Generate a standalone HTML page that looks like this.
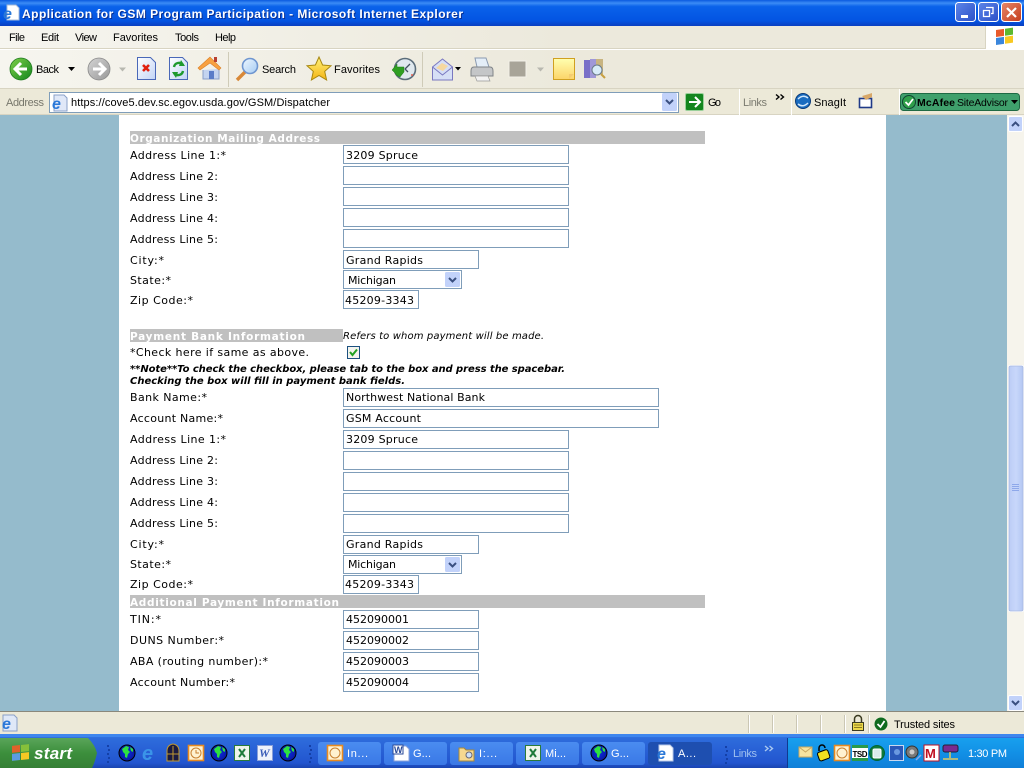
<!DOCTYPE html>
<html><head><meta charset="utf-8"><title>Application for GSM Program Participation</title>
<style>
html,body{margin:0;padding:0;width:1024px;height:768px;overflow:hidden;background:#ece9d8}
svg{display:block}
.ui{font-family:"Liberation Sans",sans-serif;font-size:11px;fill:#000}
.v{font-family:"DejaVu Sans",sans-serif;font-size:11px;fill:#000}
.h{font-family:"DejaVu Sans",sans-serif;font-size:10.5px;font-weight:bold;fill:#fff}
.f{fill:#fff;stroke:#7f9db9;stroke-width:1}
.tb{font-family:"Liberation Sans",sans-serif;font-size:11px;fill:#fff}
.ie{font-family:"Liberation Sans",sans-serif;font-weight:bold;font-style:italic;fill:#2a78d8}
</style></head><body>
<svg xmlns="http://www.w3.org/2000/svg" width="1024" height="768" viewBox="0 0 1024 768">
<defs>
<linearGradient id="title" x1="0" y1="0" x2="0" y2="1"><stop offset="0" stop-color="#0a5ae0"/><stop offset=".12" stop-color="#3b8cf5"/><stop offset=".25" stop-color="#0a62ea"/><stop offset=".8" stop-color="#0354e2"/><stop offset="1" stop-color="#0a3fc0"/></linearGradient>
<linearGradient id="tbar" x1="0" y1="0" x2="0" y2="1"><stop offset="0" stop-color="#3c80e6"/><stop offset=".12" stop-color="#2e6cdc"/><stop offset=".85" stop-color="#2255cf"/><stop offset="1" stop-color="#1a44b0"/></linearGradient>
<linearGradient id="tbtn" x1="0" y1="0" x2="0" y2="1"><stop offset="0" stop-color="#4a8cf0"/><stop offset="1" stop-color="#3a78e6"/></linearGradient>
<linearGradient id="tray" x1="0" y1="0" x2="0" y2="1"><stop offset="0" stop-color="#18a0ee"/><stop offset=".5" stop-color="#1290e6"/><stop offset="1" stop-color="#0f7fd8"/></linearGradient>
<linearGradient id="start" x1="0" y1="0" x2="0" y2="1"><stop offset="0" stop-color="#5aa55a"/><stop offset=".5" stop-color="#3c8f3c"/><stop offset="1" stop-color="#357f35"/></linearGradient>
<linearGradient id="tool" x1="0" y1="0" x2="1" y2="0"><stop offset="0" stop-color="#f6f5ef"/><stop offset=".55" stop-color="#ece9dc"/></linearGradient>
<linearGradient id="green" x1="0" y1="0" x2="1" y2="1"><stop offset="0" stop-color="#7fd04a"/><stop offset="1" stop-color="#12861e"/></linearGradient>
<linearGradient id="gray" x1="0" y1="0" x2="1" y2="1"><stop offset="0" stop-color="#d4d4d4"/><stop offset="1" stop-color="#989898"/></linearGradient>
<linearGradient id="doc" x1="0" y1="0" x2="1" y2="1"><stop offset="0" stop-color="#fff"/><stop offset="1" stop-color="#c2d4f6"/></linearGradient>
<linearGradient id="sb" x1="0" y1="0" x2="1" y2="0"><stop offset="0" stop-color="#bacbf5"/><stop offset=".5" stop-color="#c8d7fb"/><stop offset="1" stop-color="#b2c6f2"/></linearGradient>
<linearGradient id="btn" x1="0" y1="0" x2="1" y2="1"><stop offset="0" stop-color="#5e86e8"/><stop offset="1" stop-color="#2a4fc8"/></linearGradient>
<linearGradient id="cls" x1="0" y1="0" x2="1" y2="1"><stop offset="0" stop-color="#e8876a"/><stop offset="1" stop-color="#c43c1c"/></linearGradient>
<linearGradient id="note" x1="0" y1="0" x2="0" y2="1"><stop offset="0" stop-color="#ffffb0"/><stop offset="1" stop-color="#fcd468"/></linearGradient>
<linearGradient id="star" x1="0" y1="0" x2="0" y2="1"><stop offset="0" stop-color="#fff27a"/><stop offset="1" stop-color="#f4b414"/></linearGradient>
<linearGradient id="lens" x1="0" y1="0" x2="1" y2="1"><stop offset="0" stop-color="#eef7fe"/><stop offset="1" stop-color="#a6ccf4"/></linearGradient>
<radialGradient id="globe"><stop offset="0" stop-color="#0a2ee0"/><stop offset="1" stop-color="#0a18a0"/></radialGradient>
</defs>

<!-- page -->
<rect width="1024" height="768" fill="#ece9d8"/>
<rect x="0" y="115" width="1007" height="597" fill="#95bbcc"/>
<rect x="119" y="115" width="767" height="597" fill="#fff"/>

<!-- title bar -->
<rect width="1024" height="26" fill="url(#title)"/>
<g transform="translate(2,4)">
<path d="M5 1h9l3 3v12H5z" fill="#fff" stroke="#a8bcd8"/>
<text class="ie" x="1" y="15" style="font-size:16px">e</text>
</g>
<text x="23" y="19" textLength="441" lengthAdjust="spacing" style="font-family:'Liberation Sans',sans-serif;font-weight:bold;font-size:12px" fill="#0a2f90">Application for GSM Program Participation - Microsoft Internet Explorer</text>
<text x="22" y="18" textLength="441" lengthAdjust="spacing" style="font-family:'Liberation Sans',sans-serif;font-weight:bold;font-size:12px" fill="#fff">Application for GSM Program Participation - Microsoft Internet Explorer</text>
<rect x="955.500" y="2.500" width="20" height="19" rx="3" fill="url(#btn)" stroke="#fff"/>
<rect x="961" y="15" width="7" height="3" fill="#fff"/>
<rect x="978.500" y="2.500" width="20" height="19" rx="3" fill="url(#btn)" stroke="#fff"/>
<path d="M986 7.500h7v6h-2M983.500 10.500h6v6h-6z" fill="none" stroke="#fff" stroke-width="1.300"/>
<rect x="1001.500" y="2.500" width="20" height="19" rx="3" fill="url(#cls)" stroke="#fff"/>
<path d="M1007 8l9 9M1016 8l-9 9" stroke="#fff" stroke-width="2.200"/>

<!-- menu bar -->
<rect x="0" y="26" width="1024" height="23" fill="url(#tool)"/>
<rect x="0" y="48" width="1024" height="1" fill="#d8d4c2"/>
<g class="ui">
<text x="9" y="41" textLength="16">File</text><text x="41" y="41" textLength="18">Edit</text><text x="75" y="41" textLength="22">View</text><text x="113" y="41" textLength="45">Favorites</text><text x="175" y="41" textLength="24">Tools</text><text x="215" y="41" textLength="21">Help</text>
</g>
<rect x="985" y="26" width="39" height="23" fill="#fff"/><rect x="985" y="26" width="1" height="23" fill="#d8d4c2"/>
<g transform="translate(996,28) skewY(-8)">
<rect x="0" y="2" width="8" height="7" fill="#e85a2a"/><rect x="9" y="2" width="8" height="7" fill="#5cb82e"/><rect x="0" y="10" width="8" height="7" fill="#3a86dc"/><rect x="9" y="10" width="8" height="7" fill="#f8c820"/>
</g>

<!-- toolbar -->
<rect x="0" y="49" width="1024" height="40" fill="url(#tool)"/>
<rect x="0" y="49" width="1024" height="1" fill="#fff"/>
<rect x="0" y="88" width="1024" height="1" fill="#d8d4c2"/>
<!-- back -->
<circle cx="21" cy="69" r="11" fill="url(#green)" stroke="#1f7a1f" stroke-width=".8"/>
<path d="M27 69H16M21 63l-6 6 6 6" fill="none" stroke="#fff" stroke-width="3"/>
<text class="ui" x="36" y="73" textLength="23">Back</text>
<path d="M68 67h7l-3.500 4z" fill="#000"/>
<!-- forward -->
<circle cx="99" cy="69" r="11" fill="url(#gray)" stroke="#8a8a8a" stroke-width=".8"/>
<path d="M93 69h11M99 63l6 6-6 6" fill="none" stroke="#fff" stroke-width="3"/>
<path d="M119 67.500h7l-3.500 4z" fill="#b8b8b0"/>
<!-- stop -->
<path d="M137.500 57.500h13l5 5v17h-18z" fill="url(#doc)" stroke="#4a68b8"/>
<path d="M143 65l6 6M149 65l-6 6" stroke="#e02010" stroke-width="2.600"/>
<!-- refresh -->
<path d="M169.500 57.500h13l5 5v17h-18z" fill="url(#doc)" stroke="#4a68b8"/>
<path d="M174 67a5 5 0 0 1 9-2M183 71a5 5 0 0 1-9 2" fill="none" stroke="#1f9a2e" stroke-width="2.400"/>
<path d="M181 60l4 6-6 0zM176 78l-4-6 6 0z" fill="#1f9a2e"/>
<!-- home -->
<path d="M203 70v9h16V69" fill="#c4d4f0" stroke="#8aa0c8"/>
<path d="M198 68l12-11 11 11-2 2-9-7-10 7z" fill="#f8a040" stroke="#d88028" stroke-width=".6"/>
<rect x="214" y="57" width="3" height="5" fill="#b84030"/>
<rect x="209" y="71" width="5" height="8" fill="#5a7cc8"/>
<rect x="228" y="52" width="1" height="35" fill="#cfcbb8"/>
<!-- search -->
<path d="M237 80l9-9" stroke="#d88838" stroke-width="3.400"/>
<circle cx="250" cy="66" r="7.500" fill="url(#lens)" stroke="#6f96d0" stroke-width="1.600"/>
<text class="ui" x="262" y="73" textLength="34">Search</text>
<!-- star -->
<path d="M319 57l3.600 8 8.400.8-6.300 5.600 1.900 8.600-7.600-4.500-7.600 4.500 1.900-8.600-6.300-5.600 8.400-.8z" fill="url(#star)" stroke="#a88810"/>
<text class="ui" x="334" y="73" textLength="46">Favorites</text>
<!-- history -->
<circle cx="405" cy="69" r="10.500" fill="#dfe8ee" stroke="#5a6c7a" stroke-width="1.600"/>
<path d="M405 69l5-5M405 69l3 3" stroke="#405060" stroke-width="1.300"/>
<circle cx="412" cy="75" r="1" fill="#e06050"/>
<path d="M392 70l5-6v3h7v5l-4 5-4-2v-1z" fill="#2f9e22" stroke="#1f7a1a" stroke-width=".5"/>
<rect x="422" y="52" width="1" height="35" fill="#cfcbb8"/>
<!-- mail -->
<path d="M432.500 67l10-8 10 8v13h-20z" fill="#d6dff6" stroke="#7a78c0"/>
<path d="M436 68l6-5 6 3-5 5z" fill="#f6d8a0"/>
<path d="M432.500 67l10 8 10-8" fill="none" stroke="#7a78c0"/>
<path d="M455 67h6l-3 3.500z" fill="#000"/>
<!-- print -->
<path d="M475 58l11 0 3 9h-12z" fill="#e4eef8" stroke="#8a9ab0"/>
<path d="M471 71q0-4 3-4h16q3 0 3 4v5h-22z" fill="#c4c6c8" stroke="#808488"/>
<path d="M475 76h13l2 5h-13z" fill="#f2f2f2" stroke="#999" stroke-width=".7"/>
<!-- gray -->
<rect x="509" y="61" width="17" height="16" fill="#a8a498" stroke="#f2f0e8"/>
<path d="M537 67.500h7l-3.500 4z" fill="#b8b8b0"/>
<!-- note -->
<rect x="553.500" y="58.500" width="21" height="21" fill="url(#note)" stroke="#d0a020"/>
<path d="M569 79l5-5h-5z" fill="#f4cc70"/>
<!-- research -->
<rect x="584" y="60" width="6" height="18" fill="#7a70c8"/><rect x="590" y="59" width="6" height="19" fill="#a098d8"/><rect x="596" y="59" width="7" height="15" fill="#c8b480"/>
<circle cx="597" cy="70" r="5" fill="#d8ecf8" stroke="#6a7a88"/><path d="M601 74l4 4" stroke="#c8a040" stroke-width="2"/>

<!-- address bar -->
<rect x="0" y="89" width="1024" height="26" fill="#ece9d8"/>
<rect x="0" y="114" width="1024" height="1" fill="#d8d4c2"/>
<text class="ui" x="6" y="106" style="fill:#77776c" textLength="38">Address</text>
<rect x="49.500" y="92.500" width="629" height="20" fill="#fff" stroke="#7f9db9"/>
<path d="M54 95h10l3 3v13H54z" fill="#e0e8f8" stroke="#8aa0c8"/>
<text class="ie" x="52" y="109" style="font-size:16px">e</text>
<text class="ui" x="71" y="106" textLength="259">https://cove5.dev.sc.egov.usda.gov/GSM/Dispatcher</text>
<rect x="662" y="93" width="15" height="18" rx="1.500" fill="#c2d2fa"/>
<path d="M666 100l3.500 3.500 3.500-3.500" fill="none" stroke="#3a4f80" stroke-width="2"/>
<rect x="685.500" y="93.500" width="18" height="17" rx="1.500" fill="#14861e" stroke="#9ad09a"/>
<path d="M689 102h10M695 97l5 5-5 5" fill="none" stroke="#fff" stroke-width="2"/>
<text class="ui" x="708" y="106" textLength="13">Go</text>
<rect x="739" y="89" width="1" height="26" fill="#fff"/>
<text class="ui" x="743" y="106" style="fill:#7b7b70" textLength="24">Links</text>
<path d="M776 94.500l3 2.500-3 2.500M780.500 94.500l3 2.500-3 2.500" fill="none" stroke="#000" stroke-width="1.400"/>
<rect x="791" y="89" width="1" height="26" fill="#fff"/>
<circle cx="803" cy="101" r="7.500" fill="#1a6cc0" stroke="#0a3a78"/>
<path d="M798 99q5-5 10 -1M808 103q-5 5-10 1" fill="none" stroke="#cfe6fb" stroke-width="1.500"/>
<text class="ui" x="814" y="106" textLength="32">SnagIt</text>
<rect x="859.500" y="98.500" width="12" height="9" fill="#fff" stroke="#1f3a88" stroke-width="1.600"/>
<path d="M862 96l7-2 3-1v4l-6 3z" fill="#d8a868"/>
<rect x="899" y="89" width="1" height="26" fill="#fff"/>
<rect x="900.500" y="93.500" width="119" height="17" rx="3" fill="#3fa06c" stroke="#1f6a44"/>
<circle cx="909" cy="102" r="6.500" fill="#2fa04a" stroke="#143"/>
<path d="M905.500 102l3 3 4.500-6" fill="none" stroke="#fff" stroke-width="1.800"/>
<text x="917" y="106" textLength="38" style="font-family:'Liberation Sans',sans-serif;font-weight:bold;font-size:10.5px" fill="#000">McAfee</text>
<text class="ui" x="957" y="106" textLength="51" style="font-size:10.5px">SiteAdvisor</text>
<path d="M1011 100h7l-3.500 4z" fill="#000"/>

<!-- form section 1 -->
<rect x="130" y="131" width="575" height="13" fill="#c0c0c0"/>
<text class="h" x="130" y="142" textLength="190">Organization Mailing Address</text>
<g class="v">
<text x="130" y="159" textLength="96">Address Line 1:*</text>
<text x="130" y="180" textLength="88">Address Line 2:</text>
<text x="130" y="201" textLength="88">Address Line 3:</text>
<text x="130" y="222" textLength="88">Address Line 4:</text>
<text x="130" y="243" textLength="88">Address Line 5:</text>
<text x="130" y="264" textLength="34">City:*</text>
<text x="130" y="284" textLength="41">State:*</text>
<text x="130" y="304" textLength="63">Zip Code:*</text>
</g>
<rect class="f" x="343.500" y="145.500" width="225" height="18"/>
<rect class="f" x="343.500" y="166.500" width="225" height="18"/>
<rect class="f" x="343.500" y="187.500" width="225" height="18"/>
<rect class="f" x="343.500" y="208.500" width="225" height="18"/>
<rect class="f" x="343.500" y="229.500" width="225" height="18"/>
<rect class="f" x="343.500" y="250.500" width="135" height="18"/>
<rect class="f" x="343.500" y="270.500" width="118" height="18"/>
<rect class="f" x="343.500" y="290.500" width="75" height="18"/>
<rect x="445" y="272" width="15" height="15" rx="1.500" fill="#c2d2fa"/>
<path d="M449 278l3.500 3.500 3.500-3.500" fill="none" stroke="#3a4f80" stroke-width="2"/>
<g class="v">
<text x="346" y="159" textLength="72">3209 Spruce</text>
<text x="346" y="264" textLength="77">Grand Rapids</text>
<text x="348" y="284" textLength="48">Michigan</text>
<text x="345" y="304" textLength="69">45209-3343</text>
</g>

<!-- form section 2 -->
<rect x="130" y="329" width="213" height="13" fill="#c0c0c0"/>
<text class="h" x="130" y="340" textLength="175">Payment Bank Information</text>
<text class="v" x="343" y="339" textLength="201" style="font-style:italic;font-size:10px">Refers to whom payment will be made.</text>
<text class="v" x="130" y="356" textLength="179">*Check here if same as above.</text>
<rect x="347.500" y="346.500" width="12" height="12" fill="#f4f4ee" stroke="#1c5180"/>
<path d="M350 352l2.500 3 4.500-5.500" fill="none" stroke="#21a121" stroke-width="2"/>
<text class="v" x="130" y="372" textLength="435" style="font-weight:bold;font-style:italic;font-size:10px">**Note**To check the checkbox, please tab to the box and press the spacebar.</text>
<text class="v" x="130" y="384" textLength="275" style="font-weight:bold;font-style:italic;font-size:10px">Checking the box will fill in payment bank fields.</text>
<g class="v">
<text x="130" y="401" textLength="77">Bank Name:*</text>
<text x="130" y="422" textLength="93">Account Name:*</text>
<text x="130" y="443" textLength="96">Address Line 1:*</text>
<text x="130" y="464" textLength="88">Address Line 2:</text>
<text x="130" y="485" textLength="88">Address Line 3:</text>
<text x="130" y="506" textLength="88">Address Line 4:</text>
<text x="130" y="527" textLength="88">Address Line 5:</text>
<text x="130" y="548" textLength="34">City:*</text>
<text x="130" y="568" textLength="41">State:*</text>
<text x="130" y="588" textLength="63">Zip Code:*</text>
</g>
<rect class="f" x="343.500" y="388.500" width="315" height="18"/>
<rect class="f" x="343.500" y="409.500" width="315" height="18"/>
<rect class="f" x="343.500" y="430.500" width="225" height="18"/>
<rect class="f" x="343.500" y="451.500" width="225" height="18"/>
<rect class="f" x="343.500" y="472.500" width="225" height="18"/>
<rect class="f" x="343.500" y="493.500" width="225" height="18"/>
<rect class="f" x="343.500" y="514.500" width="225" height="18"/>
<rect class="f" x="343.500" y="535.500" width="135" height="18"/>
<rect class="f" x="343.500" y="555.500" width="118" height="18"/>
<rect class="f" x="343.500" y="575.500" width="75" height="18"/>
<rect x="445" y="557" width="15" height="15" rx="1.500" fill="#c2d2fa"/>
<path d="M449 563l3.500 3.500 3.500-3.500" fill="none" stroke="#3a4f80" stroke-width="2"/>
<g class="v">
<text x="346" y="401" textLength="139">Northwest National Bank</text>
<text x="346" y="422" textLength="75">GSM Account</text>
<text x="346" y="443" textLength="72">3209 Spruce</text>
<text x="346" y="548" textLength="77">Grand Rapids</text>
<text x="348" y="568" textLength="48">Michigan</text>
<text x="345" y="588" textLength="69">45209-3343</text>
</g>

<!-- section 3 -->
<rect x="130" y="595" width="575" height="13" fill="#c0c0c0"/>
<text class="h" x="130" y="606" textLength="209">Additional Payment Information</text>
<g class="v">
<text x="130" y="623" textLength="31">TIN:*</text>
<text x="130" y="644" textLength="94">DUNS Number:*</text>
<text x="130" y="665" textLength="138">ABA (routing number):*</text>
<text x="130" y="686" textLength="105">Account Number:*</text>
</g>
<rect class="f" x="343.500" y="610.500" width="135" height="18"/>
<rect class="f" x="343.500" y="631.500" width="135" height="18"/>
<rect class="f" x="343.500" y="652.500" width="135" height="18"/>
<rect class="f" x="343.500" y="673.500" width="135" height="18"/>
<g class="v">
<text x="346" y="623" textLength="63">452090001</text>
<text x="346" y="644" textLength="63">452090002</text>
<text x="346" y="665" textLength="63">452090003</text>
<text x="346" y="686" textLength="63">452090004</text>
</g>

<!-- scrollbar -->
<rect x="1007" y="115" width="17" height="597" fill="#f6f4ec"/>
<rect x="1008.500" y="116.500" width="14" height="15" rx="1.500" fill="#c2d2fa" stroke="#fff"/>
<path d="M1012 126l3.500-3.500 3.500 3.500" fill="none" stroke="#3a4f80" stroke-width="2"/>
<rect x="1008.500" y="365.500" width="15" height="246" rx="1.500" fill="url(#sb)" stroke="#fff"/>
<rect x="1009" y="366" width="14" height="245" rx="1.500" fill="none" stroke="#a8b8e0" stroke-width=".8"/>
<path d="M1012 484.500h7M1012 486.500h7M1012 488.500h7M1012 490.500h7" stroke="#8ea8ea"/>
<rect x="1008.500" y="695.500" width="14" height="15" rx="1.500" fill="#c2d2fa" stroke="#fff"/>
<path d="M1012 701l3.500 3.500 3.500-3.500" fill="none" stroke="#3a4f80" stroke-width="2"/>

<!-- status bar -->
<rect x="0" y="711" width="1024" height="1" fill="#8a887c"/>
<rect x="0" y="712" width="1024" height="22" fill="#ece9d8"/>
<path d="M3 715h11l3 3v13H3z" fill="#dfe8f8" stroke="#8aa0c8"/>
<text class="ie" x="2" y="729" style="font-size:16px">e</text>
<g fill="#fff"><rect x="749" y="715" width="1" height="18"/><rect x="773" y="715" width="1" height="18"/><rect x="797" y="715" width="1" height="18"/><rect x="821" y="715" width="1" height="18"/><rect x="845" y="715" width="1" height="18"/><rect x="869" y="715" width="1" height="18"/></g>
<g fill="#cbc7b4"><rect x="748" y="715" width="1" height="18"/><rect x="772" y="715" width="1" height="18"/><rect x="796" y="715" width="1" height="18"/><rect x="820" y="715" width="1" height="18"/><rect x="844" y="715" width="1" height="18"/><rect x="868" y="715" width="1" height="18"/></g>
<path d="M854.500 722v-3a3.500 3.500 0 0 1 7 0v3" fill="none" stroke="#3a3a20" stroke-width="1.500"/>
<rect x="852.500" y="722.500" width="11" height="8" fill="#ecd84a" stroke="#3a3a20"/>
<path d="M854 725h8M854 727.500h8" stroke="#8a7a20"/>
<circle cx="881" cy="724" r="6.500" fill="#0f6a1e"/>
<path d="M877.500 724l3 3 4-6" fill="none" stroke="#fff" stroke-width="1.800"/>
<text class="ui" x="894" y="728" textLength="61">Trusted sites</text>

<!-- taskbar -->
<rect x="0" y="734" width="1024" height="34" fill="url(#tbar)"/>
<rect x="0" y="734" width="1024" height="3" fill="#3e86ee"/>
<path d="M0 738H88Q95 745 97 753 95 762 92 768H0z" fill="url(#start)"/>
<g transform="translate(11,745) skewY(-6)">
<rect x="1" y="1" width="8" height="7" fill="#e0622a"/><rect x="10" y="1" width="8" height="7" fill="#86c03a"/><rect x="1" y="9" width="8" height="7" fill="#5c9ce0"/><rect x="10" y="9" width="8" height="7" fill="#f4c824"/>
</g>
<text x="34" y="759" style="font-family:'Liberation Sans',sans-serif;font-weight:bold;font-style:italic;font-size:17px" fill="#fff" textLength="38">start</text>
<g fill="#1440a8"><rect x="107" y="745" width="2" height="2"/><rect x="108" y="749" width="2" height="2"/><rect x="107" y="753" width="2" height="2"/><rect x="108" y="757" width="2" height="2"/><rect x="107" y="761" width="2" height="2"/>
<rect x="309" y="745" width="2" height="2"/><rect x="310" y="749" width="2" height="2"/><rect x="309" y="753" width="2" height="2"/><rect x="310" y="757" width="2" height="2"/><rect x="309" y="761" width="2" height="2"/>
<rect x="725" y="746" width="2" height="2"/><rect x="726" y="750" width="2" height="2"/><rect x="725" y="754" width="2" height="2"/><rect x="726" y="758" width="2" height="2"/><rect x="725" y="762" width="2" height="2"/></g>
<!-- quick launch -->
<g><circle cx="127" cy="753" r="8" fill="url(#globe)" stroke="#000" stroke-width="1"/><path d="M122 749l4-3 3 1-1 3 2 2-2 2-1 4-2-1 0-3-2-2zM130 747l3 2 0 3-2-1z" fill="#2ee040"/></g>
<text class="ie" x="142" y="760" style="font-size:20px;fill:#3a94e8">e</text>
<path d="M167 761v-10q0-6 6-7 6 1 6 7v10z" fill="#1a1a40" stroke="#c09830"/><path d="M173 746v15M167 754h12" stroke="#c09830"/>
<rect x="188.500" y="745.500" width="15" height="15" fill="#fff2d0" stroke="#e88a20" stroke-width="1.600"/><circle cx="196" cy="753" r="5" fill="none" stroke="#c88030"/><path d="M196 750v3h3" fill="none" stroke="#c88030"/>
<g transform="translate(92,0)"><circle cx="127" cy="753" r="8" fill="url(#globe)" stroke="#000"/><path d="M122 749l4-3 3 1-1 3 2 2-2 2-1 4-2-1 0-3-2-2zM130 747l3 2 0 3-2-1z" fill="#2ee040"/></g>
<rect x="234.500" y="745.500" width="15" height="15" fill="#eef4ea" stroke="#2a7a3a"/><path d="M239 749l6 8M245 749l-6 8" stroke="#1f7a3a" stroke-width="2"/>
<rect x="257.500" y="745.500" width="15" height="15" fill="#eef2fb" stroke="#8aa0d8"/><text x="259" y="757" style="font-family:'Liberation Serif',serif;font-weight:bold;font-style:italic;font-size:12px" fill="#3a5cb8">W</text>
<g transform="translate(161,0)"><circle cx="127" cy="753" r="8" fill="url(#globe)" stroke="#000"/><path d="M122 749l4-3 3 1-1 3 2 2-2 2-1 4-2-1 0-3-2-2zM130 747l3 2 0 3-2-1z" fill="#2ee040"/></g>
<!-- task buttons -->
<rect x="318" y="742" width="63" height="23" rx="3" fill="url(#tbtn)"/>
<rect x="384" y="742" width="63" height="23" rx="3" fill="url(#tbtn)"/>
<rect x="450" y="742" width="63" height="23" rx="3" fill="url(#tbtn)"/>
<rect x="516" y="742" width="63" height="23" rx="3" fill="url(#tbtn)"/>
<rect x="582" y="742" width="63" height="23" rx="3" fill="url(#tbtn)"/>
<rect x="648" y="742" width="64" height="23" rx="3" fill="#1e4fb0"/>
<rect x="327.500" y="745.500" width="15" height="15" fill="#fff2d0" stroke="#e88a20" stroke-width="1.600"/><circle cx="335" cy="753" r="5" fill="none" stroke="#c88030"/>
<text class="tb" x="347" y="757" textLength="21">In...</text>
<path d="M394 746h12l3 3v12h-15z" fill="#fff" stroke="#8aa0d8"/><rect x="393" y="745" width="10" height="9" fill="#fff" stroke="#2a4a98"/><text x="394" y="753" style="font-family:'Liberation Sans',sans-serif;font-weight:bold;font-size:9px" fill="#2a4a98">W</text>
<text class="tb" x="413" y="757" textLength="18">G...</text>
<path d="M459 748h5l2 2h8v11h-15z" fill="#f6d890" stroke="#a88838"/><circle cx="469" cy="755" r="3" fill="#cfe0f6" stroke="#667"/>
<text class="tb" x="479" y="757" textLength="18">I:...</text>
<rect x="525.500" y="745.500" width="15" height="15" fill="#eef4ea" stroke="#2a7a3a"/><path d="M530 749l6 8M536 749l-6 8" stroke="#1f7a3a" stroke-width="2"/>
<text class="tb" x="545" y="757" textLength="21">Mi...</text>
<g transform="translate(472,0)"><circle cx="127" cy="753" r="8" fill="url(#globe)" stroke="#000"/><path d="M122 749l4-3 3 1-1 3 2 2-2 2-1 4-2-1 0-3-2-2zM130 747l3 2 0 3-2-1z" fill="#2ee040"/></g>
<text class="tb" x="611" y="757" textLength="18">G...</text>
<path d="M659 745h11l3 3v13h-14z" fill="#fff" stroke="#b8c8e8"/><text class="ie" x="657" y="759" style="font-size:16px">e</text>
<text class="tb" x="678" y="757" textLength="18">A...</text>
<text class="tb" x="733" y="757" style="fill:#9fc0f0" textLength="24">Links</text>
<path d="M765 746l3 2.500-3 2.500M769.500 746l3 2.500-3 2.500" fill="none" stroke="#a8c8f0" stroke-width="1.400"/>
<!-- tray -->
<rect x="788" y="738" width="236" height="30" fill="url(#tray)"/>
<rect x="787" y="738" width="1" height="30" fill="#0f3a90"/>
<rect x="799" y="747" width="13" height="10" fill="#f6e4a0" stroke="#c8a860"/><path d="M799 747l6.500 5 6.500-5" fill="none" stroke="#c8a860"/>
<rect x="818" y="751" width="11" height="9" rx="2" fill="#f0e020" stroke="#000" transform="rotate(-20 823 755)"/><path d="M819 751v-3a3 3 0 0 1 6 0" fill="none" stroke="#000" stroke-width="1.500"/>
<rect x="834.500" y="745.500" width="15" height="15" fill="#fff2d0" stroke="#e88a20" stroke-width="1.600"/><circle cx="842" cy="753" r="5" fill="none" stroke="#c88030"/>
<rect x="852" y="745" width="16" height="16" fill="#fff"/><rect x="852" y="745" width="16" height="3" fill="#2a9a4a"/><rect x="852" y="758" width="16" height="3" fill="#2a9a4a"/>
<text x="852.500" y="757" textLength="15" style="font-family:'Liberation Sans',sans-serif;font-weight:bold;font-size:8px" fill="#000">TSD</text>
<circle cx="877" cy="753" r="7.500" fill="#0e7a3a" stroke="#063"/><rect x="873" y="749" width="8" height="9" rx="1.500" fill="#d8ecec" stroke="#fff"/>
<rect x="889.500" y="745.500" width="14" height="15" fill="#2a58b8" stroke="#c8d8f0"/><circle cx="897" cy="752" r="3" fill="#6a98e0"/>
<circle cx="912" cy="752" r="6" fill="#787878" stroke="#333"/><circle cx="912" cy="752" r="2.500" fill="#ccc"/><path d="M916 760l5-5" stroke="#8aa8e8" stroke-width="1.500"/>
<rect x="924" y="745" width="15" height="16" fill="#fff" stroke="#c01020"/><text x="925" y="758" textLength="13" style="font-family:'Liberation Sans',sans-serif;font-weight:bold;font-size:13px" fill="#c01020">M</text>
<rect x="943" y="745" width="15" height="7" rx="2" fill="#7a2a90" stroke="#223"/><path d="M950 752v6M943 759h15" stroke="#dfc860" stroke-width="1.500"/>
<text class="tb" x="968" y="757" textLength="39">1:30 PM</text>
</svg>
</body></html>
